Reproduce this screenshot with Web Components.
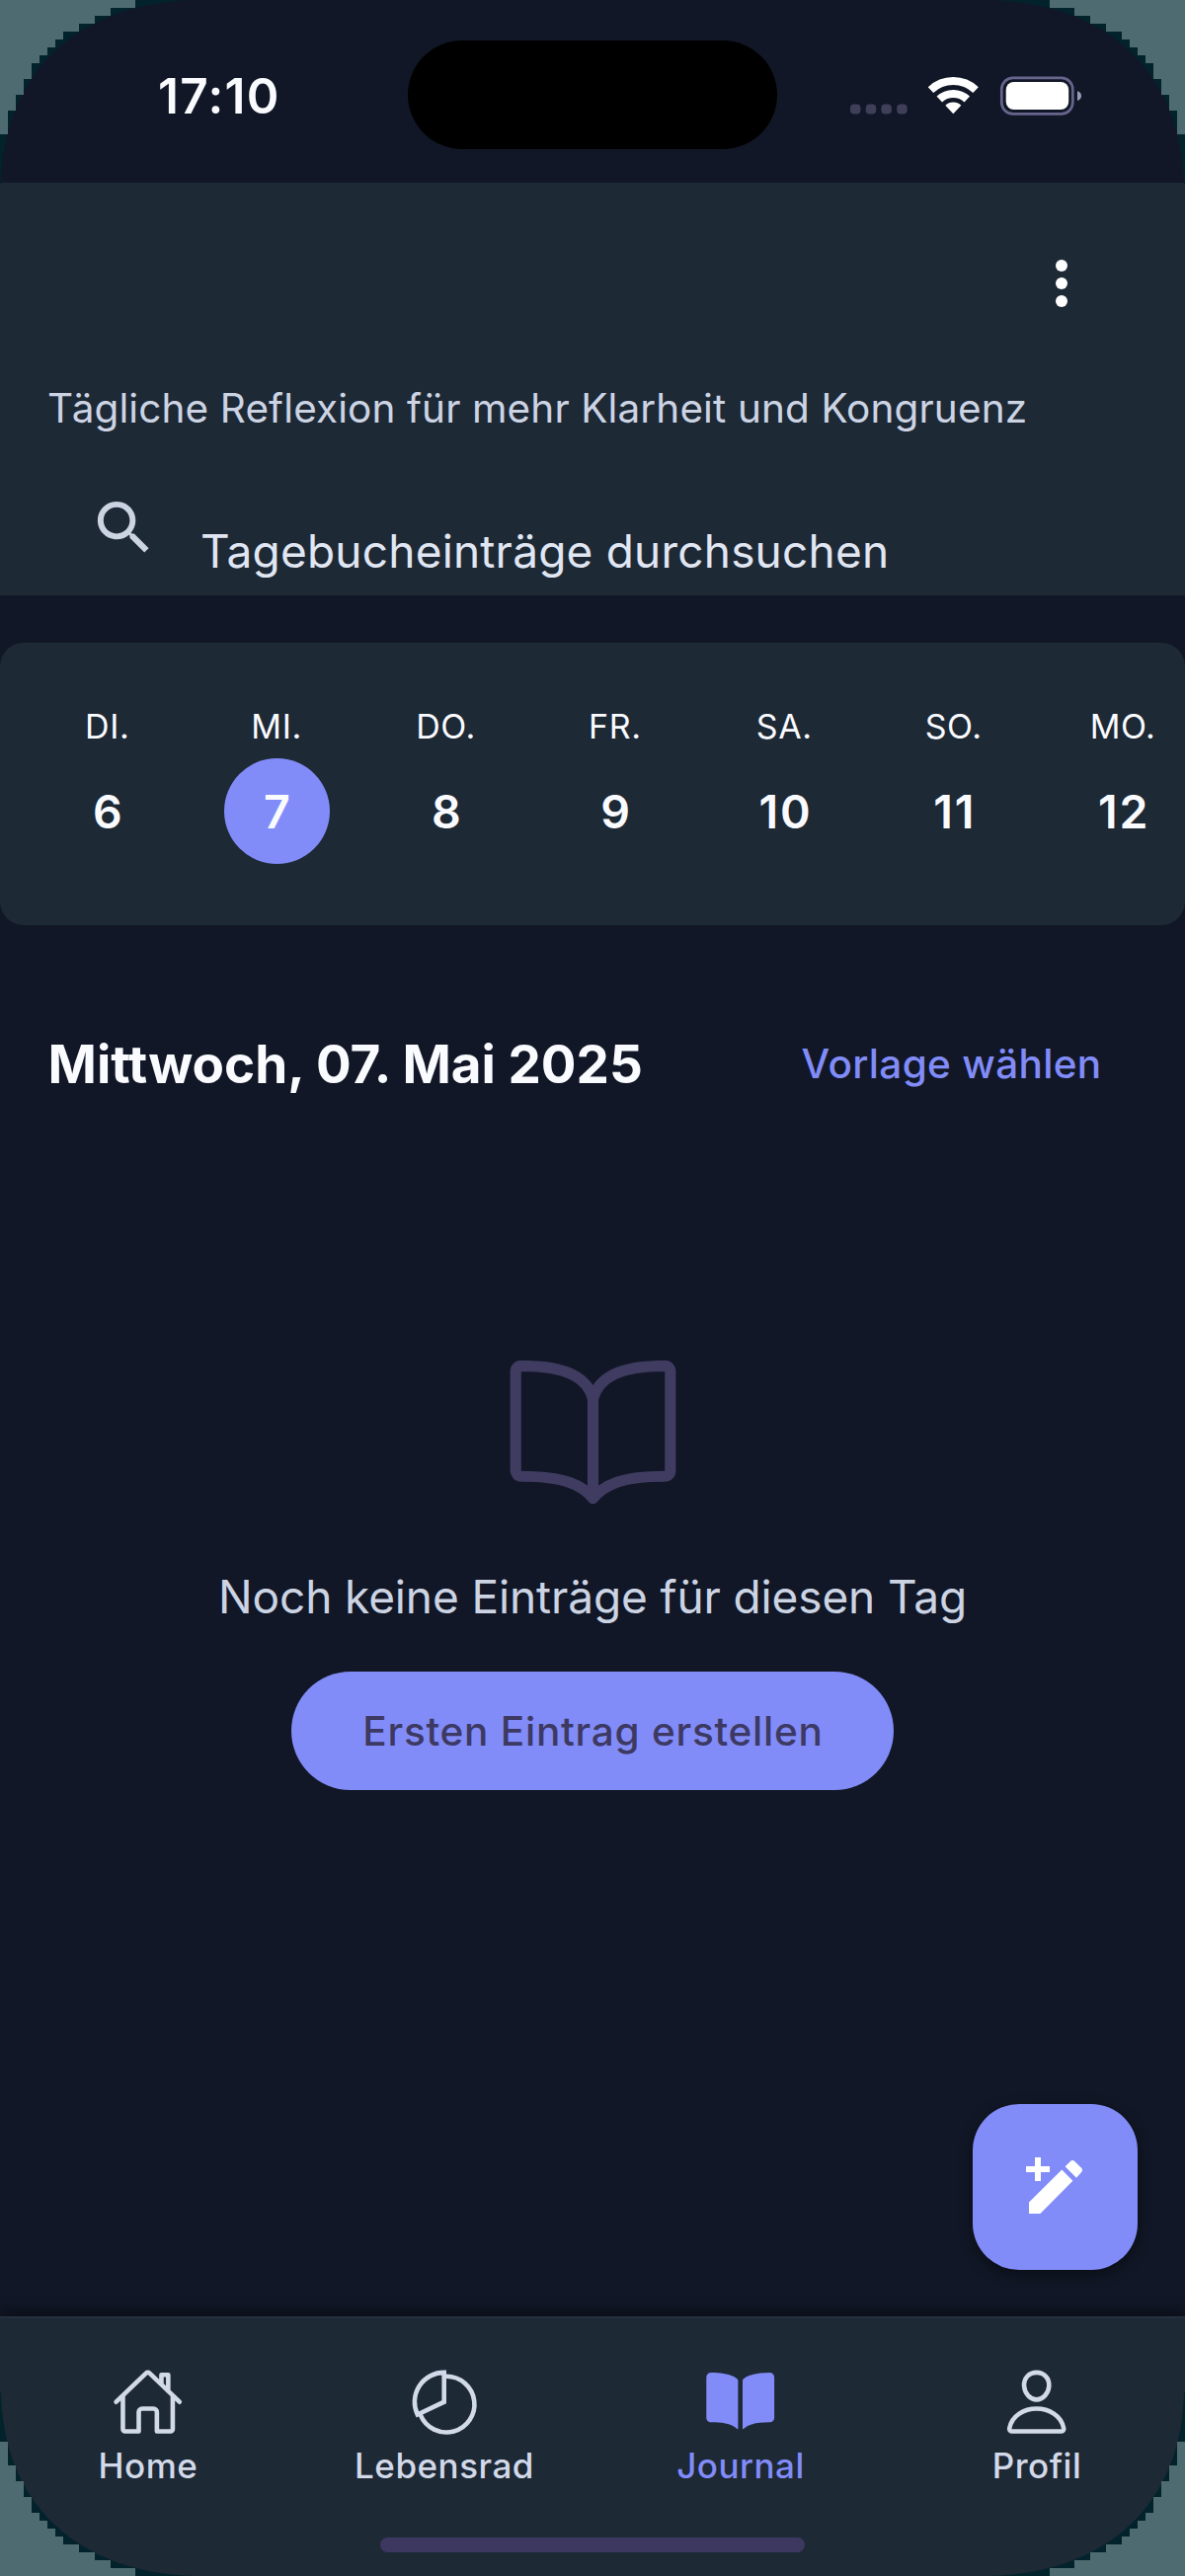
<!DOCTYPE html>
<html lang="de">
<head>
<meta charset="utf-8">
<title>Journal</title>
<style>
html, body { margin: 0; padding: 0; background: #111726; }
body { font-family: Inter, "Liberation Sans", sans-serif; }
</style>
</head>
<body>
<journal-app></journal-app>
<script>
const define = (name, html) => customElements.define(name, class extends HTMLElement {
  connectedCallback() {
    if (this.shadowRoot) return;
    const root = this.attachShadow({ mode: 'open' });
    const t = document.createElement('template');
    t.innerHTML = typeof html === 'function' ? html(this) : html;
    root.append(t.content.cloneNode(true));
  }
});

const icons = {
  search: '<svg viewBox="0 0 24 24"><path fill="currentColor" d="M15.5 14h-.79l-.28-.27C15.41 12.59 16 11.11 16 9.5 16 5.91 13.09 3 9.5 3S3 5.91 3 9.5 5.91 16 9.5 16c1.61 0 3.09-.59 4.23-1.57l.27.28v.79l5 4.99L20.49 19l-4.99-5zm-6 0C7.01 14 5 11.99 5 9.5S7.01 5 9.5 5 14 7.01 14 9.5 11.99 14 9.5 14z"/></svg>',
  'edit-add': '<svg viewBox="0 0 24 24"><path fill="currentColor" d="M20.7 7C21.1 6.6 21.1 6 20.7 5.6L18.4 3.3C18 2.9 17.4 2.9 17 3.3L15.2 5.1L19 8.9M3 17.2V21H6.8L17.8 9.9L14.1 6.2L3 17.2M7 2V5H10V7H7V10H5V7H2V5H5V2H7Z"/></svg>',
  'book-outline': '<svg viewBox="0 0 512 512"><path fill="none" stroke="currentColor" stroke-width="32" stroke-linecap="round" stroke-linejoin="round" d="M256 160c16-63.16 76.43-95.41 208-96a15.94 15.94 0 0116 16v288a16 16 0 01-16 16c-128 0-177.45 25.81-208 64-30.37-38-80-64-208-64-9.88 0-16-8.05-16-17.93V80a15.94 15.94 0 0116-16c131.57.59 192 32.84 208 96zM256 160v288"/></svg>',
  book: '<svg viewBox="0 0 512 512"><path fill="currentColor" d="M202.24 74C166.11 56.75 115.61 48.3 48 48a31.36 31.36 0 00-17.92 5.33A32 32 0 0016 79.9V366c0 19.34 13.76 33.93 32 33.93 71.07 0 142.36 6.64 185.06 47a4.11 4.11 0 006.94-3V106.82a15.89 15.89 0 00-5.46-12A143 143 0 00202.24 74zM481.92 53.3A31.33 31.33 0 00464 48c-67.61.3-118.11 8.71-154.24 26a143.31 143.31 0 00-32.31 20.78 15.93 15.93 0 00-5.45 12v337.13a3.93 3.93 0 006.68 2.81c25.67-25.5 70.72-46.82 185.36-46.81a32 32 0 0032-32v-288a32 32 0 00-14.08-26.61z"/></svg>',
  home: '<svg viewBox="0 0 512 512"><path fill="none" stroke="currentColor" stroke-width="32" stroke-linecap="round" stroke-linejoin="round" d="M80 212v236a16 16 0 0016 16h96V328a24 24 0 0124-24h80a24 24 0 0124 24v136h96a16 16 0 0016-16V212M480 256L266.89 52c-5-5.28-16.69-5.34-21.78 0L32 256M400 179V64h-48v69"/></svg>',
  pie: '<svg viewBox="0 0 512 512"><g fill="none" stroke="currentColor" stroke-width="32" stroke-linecap="round" stroke-linejoin="miter"><path d="M256 48V256L68 345A208 208 0 0 1 256 48Z"/><path d="M272 75A198 198 0 1 1 90 350"/></g></svg>',
  person: '<svg viewBox="0 0 512 512"><g fill="none" stroke="currentColor" stroke-width="32" stroke-linecap="round" stroke-linejoin="round"><path d="M344 144c-3.92 52.87-44 96-88 96s-84.15-43.12-88-96c-4-55 35-96 88-96s92 42 88 96z"/><path d="M256 304c-87 0-175.3 48-191.64 138.6C62.39 453.52 68.57 464 80 464h352c11.44 0 17.62-10.48 15.65-21.4C431.3 352 343 304 256 304z"/></g></svg>',
  more: '<svg viewBox="0 0 12 48"><g fill="currentColor"><circle cx="6" cy="6" r="6"/><circle cx="6" cy="24" r="6"/><circle cx="6" cy="42" r="6"/></g></svg>'
};

define('app-icon', el => `<style>:host{display:block;flex:none}svg{display:block;width:100%;height:100%}</style>${icons[el.getAttribute('name')]}`);

define('status-bar', `<style>
:host{display:flex;align-items:center;box-sizing:border-box;height:185px;padding:9.6px 0 0 160px;color:#fafbff}
.time{width:253px;font-size:49.5px;line-height:60px;font-weight:600;letter-spacing:1.3px}
.island{width:374px;height:110px;border-radius:55px;background:#000;margin-top:-2.6px}
svg{display:block;margin-left:74px}
</style>
<div class="time">17:10</div><div class="island"></div>
<svg width="236" height="40" viewBox="0 0 236 40">
<g fill="#403f5a"><rect x="0" y="28.5" width="10.5" height="10" rx="4"/><rect x="15.7" y="28.5" width="10.5" height="10" rx="4"/><rect x="31.4" y="28.5" width="10.5" height="10" rx="4"/><rect x="47.2" y="28.5" width="10.5" height="10" rx="4"/></g>
<g transform="translate(104.3 38.2)"><g fill="none" stroke="#fff" stroke-width="8"><path d="M-22.8-24.1A33.2 33.2 0 0 1 22.8-24.1"/><path d="M-14-14.7A20.3 20.3 0 0 1 14-14.7"/></g><path fill="#fff" d="M0 0L-8-8.4A11.6 11.6 0 0 1 8-8.4Z"/></g>
<rect x="153.3" y="1.9" width="72" height="36.4" rx="11.5" fill="none" stroke="#67658c" stroke-width="2.7"/>
<rect x="157.7" y="6" width="63.5" height="28" rx="8" fill="#fff"/>
<path fill="#9a99b8" d="M230 15.2Q234 16.5 234 20T230 25Z"/>
</svg>`);

define('journal-header', `<style>
:host{display:block;height:418px;background:#1e2936;color:#ccd4e4}
.bar{display:flex;align-items:center;justify-content:flex-end;height:203.3px;padding-right:119.5px;color:#fff}
.bar app-icon{width:12px;height:48px}
p{margin:0;padding-left:48px;font-size:40.5px;line-height:51px;letter-spacing:.11px;white-space:nowrap}
.search{display:flex;gap:42.5px;padding-left:89.5px}
.search app-icon{width:71px;height:71px;margin-top:59.5px}
.search span{margin-top:90.5px;font-size:46px;line-height:56px;letter-spacing:.2px;color:#e0e6f2;white-space:nowrap}
</style>
<div class="bar"><app-icon name="more"></app-icon></div>
<p><slot></slot></p>
<div class="search"><app-icon name="search"></app-icon><span><slot name="search"></slot></span></div>`);

define('calendar-day', el => `<style>
:host{display:flex;flex-direction:column;align-items:center;gap:12.4px;flex:none;width:171.4px;color:#fafbff}
.name{font-size:34px;line-height:40px;letter-spacing:.6px;margin-left:-.6px}
.num{display:flex;align-items:center;justify-content:center;width:107.5px;height:107.5px;border-radius:50%;font-size:46.5px;font-weight:600}
.num span{letter-spacing:1.8px;margin-right:-1.8px}
:host([selected]) .num{background:#818cf8}
</style>
<div class="name">${el.getAttribute('name')}</div><div class="num"><span><slot></slot></span></div>`);

define('week-strip', `<style>
:host{display:flex;box-sizing:border-box;height:286px;margin-top:48px;padding:64.6px 0 0 23.3px;border-radius:24px;background:#1e2936;overflow:hidden}
</style><slot></slot>`);

define('day-heading', `<style>
:host{display:flex;align-items:center;justify-content:space-between;margin-top:108.8px;padding:0 84.5px 0 48.5px;height:64px;white-space:nowrap}
h1{margin:0;font-size:53px;line-height:64px;font-weight:700;letter-spacing:0;color:#fafbff}
a{font-size:40.5px;line-height:50px;font-weight:500;letter-spacing:.32px;color:#818cf8}
</style><h1><slot></slot></h1><a><slot name="action"></slot></a>`);

define('empty-state', `<style>
:host{display:flex;flex-direction:column;align-items:center;margin-top:251.4px}
app-icon{width:179px;height:179px;color:#3f3b61}
p{margin:49px 0 47.7px;font-size:46px;line-height:56px;letter-spacing:-.12px;color:#ccd4e4;white-space:nowrap}
button{display:block;width:610.6px;height:119.7px;padding:2px 0 0 1px;border:0;border-radius:60px;background:#818cf8;color:#3d3963;font:500 40.5px/50px Inter,"Liberation Sans",sans-serif;letter-spacing:.75px}
</style><app-icon name="book-outline"></app-icon><p><slot></slot></p><button><slot name="button"></slot></button>`);

define('fab-button', `<style>
:host{position:absolute;left:985px;top:2131px;display:flex;align-items:center;justify-content:center;width:167px;height:168px;border-radius:47px;background:#818cf8;color:#fff;box-shadow:0 4px 14px rgba(0,0,0,.45)}
app-icon{width:72px;height:72px}
</style><app-icon name="edit-add"></app-icon>`);

define('tab-item', el => `<style>
:host{display:flex;flex-direction:column;align-items:center;gap:6.4px;flex:1;color:#d2d9e8}
:host([active]){color:#818cf8}
app-icon{width:73.4px;height:73.4px}
span{font-size:35px;line-height:42px;font-weight:500;letter-spacing:.5px}
</style><app-icon name="${el.getAttribute('icon')}"></app-icon><span><slot></slot></span>`);

define('tab-bar', `<style>
:host{display:block;box-sizing:border-box;height:263px;margin-top:auto;border-top:2px solid #272f3e;padding-top:48.3px;background:#1e2936;box-shadow:0 -6px 12px rgba(0,0,0,.35)}
nav{display:flex}
.grip{width:430px;height:15px;margin:51.9px auto 0;border-radius:8px;background:#3d3860}
</style><nav><slot></slot></nav><div class="grip"></div>`);

/* Stepped backdrop that shows around the rounded corners of the screen. */
const corner = t => `<g transform="${t}"><path fill="#03232c" d="M0 0H200C84 2 4 68 1 186H0Z"/><path fill="#4f6b72" d="M0 0H137V8H112V16H96V24H80V32H64V40H56V48H48V56H40V64H32V80H24V96H16V112H8V136H0Z"/></g>`;
define('screen-corners', `<style>:host{position:absolute;inset:0;pointer-events:none}svg{display:block}</style>
<svg width="1200" height="2609" viewBox="0 0 1200 2609">${corner('')}${corner('translate(1200 0) scale(-1 1)')}${corner('translate(0 2609) scale(1 -1)')}${corner('translate(1200 2609) scale(-1 -1)')}</svg>`);

define('journal-app', `<style>
:host{display:flex;flex-direction:column;position:relative;width:1200px;height:2609px;overflow:hidden;background:#111726}
</style>
<status-bar></status-bar>
<journal-header>Tägliche Reflexion für mehr Klarheit und Kongruenz<span slot="search">Tagebucheinträge durchsuchen</span></journal-header>
<week-strip>
<calendar-day name="DI.">6</calendar-day><calendar-day name="MI." selected>7</calendar-day><calendar-day name="DO.">8</calendar-day><calendar-day name="FR.">9</calendar-day><calendar-day name="SA.">10</calendar-day><calendar-day name="SO.">11</calendar-day><calendar-day name="MO.">12</calendar-day>
</week-strip>
<day-heading>Mittwoch, 07. Mai 2025<span slot="action">Vorlage wählen</span></day-heading>
<empty-state>Noch keine Einträge für diesen Tag<span slot="button">Ersten Eintrag erstellen</span></empty-state>
<tab-bar><tab-item icon="home">Home</tab-item><tab-item icon="pie">Lebensrad</tab-item><tab-item icon="book" active>Journal</tab-item><tab-item icon="person">Profil</tab-item></tab-bar>
<fab-button></fab-button>
<screen-corners></screen-corners>`);
</script>
</body>
</html>
